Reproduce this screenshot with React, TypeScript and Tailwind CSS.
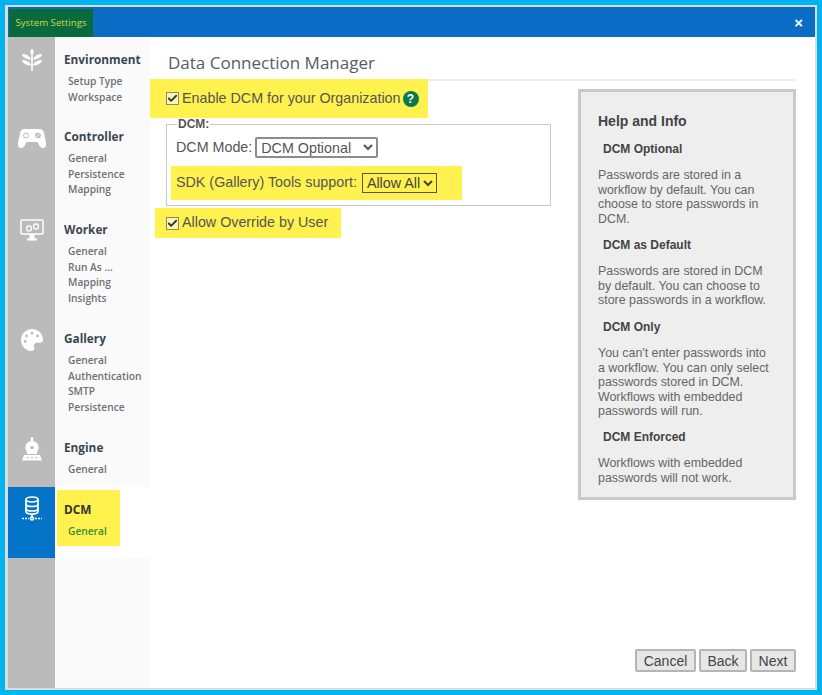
import React from "react";
import { FaPalette } from "react-icons/fa";
import { Check } from "lucide-react";

const LeafIcon = () => (
  <svg width="20" height="24" viewBox="0 0 20 24" fill="white">
    <path d="M10 1c2.200 1.600 2.600 3.500 0 6.500C7.400 4.500 7.800 2.600 10 1Z" />
    <path d="M0 6c4 0 7.500 1.500 9.200 5.500C5 11.500 1 10.200 0 6Z" />
    <path d="M20 6c-4 0-7.500 1.500-9.200 5.500 4.200 0 8.200-1.300 9.200-5.500Z" />
    <path d="M0 12c4 0 7.500 1.500 9.200 5.500C5 17.500 1 16.200 0 12Z" />
    <path d="M20 12c-4 0-7.500 1.500-9.200 5.500 4.200 0 8.200-1.300 9.200-5.500Z" />
    <path d="M9.200 7h1.600v15.500c0 .7-1.600.7-1.600 0Z" />
  </svg>
);

const PadIcon = () => (
  <svg width="28" height="19" viewBox="0 0 28 19">
    <path fill="white" d="M7 0h14c3 0 4.500 1.500 5 4l2 10c.5 3-1 5-3 5-1.800 0-2.800-1-3.800-2.500L19.500 13h-11l-1.700 3.500C5.800 18 4.800 19 3 19c-2 0-3.500-2-3-5L2 4c.5-2.500 2-4 5-4Z" />
    <circle cx="8" cy="6.500" r="2.500" fill="none" stroke="#bbbbbb" strokeWidth="1" />
    <circle cx="20" cy="6.500" r="2.800" fill="#bbbbbb" />
    <path d="M18.500 8 21.500 5" stroke="white" strokeWidth="1" />
  </svg>
);

const MonitorIcon = () => (
  <svg width="24" height="22" viewBox="0 0 24 22" fill="none" stroke="white">
    <rect x="1" y="1" width="22" height="14" rx="1" strokeWidth="1.500" />
    <circle cx="9" cy="9.500" r="2.500" strokeWidth="1.300" />
    <circle cx="16" cy="7.500" r="2.500" strokeWidth="1.300" />
    <path d="M10.500 16h3v3h-3Z M7 20.500h10" strokeWidth="2" fill="white" />
  </svg>
);

const EngineIcon = () => (
  <svg width="20" height="24" viewBox="0 0 20 24" fill="white">
    <path d="M10 0a1.300 1.300 0 0 1 1 2.200V5H9V2.200A1.300 1.300 0 0 1 10 0Z" />
    <path fillRule="evenodd" d="M10 4a6.500 6.500 0 0 1 5 10.700V17H5v-2.300A6.500 6.500 0 0 1 10 4Zm0 4.800a1.700 1.700 0 1 0 0 3.400 1.700 1.700 0 0 0 0-3.400Z" />
    <path d="M2 18h16l2 5.500H0Z" />
    <path d="M5 20.500h2M9 20.500h2M13 20.500h2" stroke="#bbbbbb" strokeWidth="1" />
  </svg>
);

const DbIcon = () => (
  <svg width="20" height="26" viewBox="0 0 20 26" fill="none" stroke="white" strokeWidth="1.700">
    <ellipse cx="10" cy="3.500" rx="6" ry="2.500" />
    <path d="M4 3.500v12c0 1.400 2.700 2.500 6 2.500s6-1.100 6-2.500v-12" />
    <path d="M4 8c0 1.400 2.700 2.500 6 2.500S16 9.400 16 8M4 12.500c0 1.400 2.700 2.500 6 2.500s6-1.100 6-2.500" />
    <path d="M10 18v3" />
    <circle cx="10" cy="22.500" r="1.500" />
    <path d="M0 22.500h7M13 22.500h7" strokeDasharray="2 1" />
  </svg>
);

type Section = { title: string; items: string[]; h: string; icon: React.ReactNode; iconPad: string };

const sections: Section[] = [
  { title: "Environment", items: ["Setup Type", "Workspace"], h: "h-[77px]", icon: <LeafIcon />, iconPad: "pt-[11px]" },
  { title: "Controller", items: ["General", "Persistence", "Mapping"], h: "h-[93px]", icon: <PadIcon />, iconPad: "pt-[15px]" },
  { title: "Worker", items: ["General", "Run As ...", "Mapping", "Insights"], h: "h-[109px]", icon: <MonitorIcon />, iconPad: "pt-[12px]" },
  { title: "Gallery", items: ["General", "Authentication", "SMTP", "Persistence"], h: "h-[109px]", icon: <FaPalette size={22} color="white" />, iconPad: "pt-[13px]" },
  { title: "Engine", items: ["General"], h: "h-[62px]", icon: <EngineIcon />, iconPad: "pt-[12px]" },
];

const Box = () => (
  <span className="flex h-[13px] w-[13px] shrink-0 items-center justify-center border border-[#8a8a6a] bg-[#fbf6b0]">
    <Check size={13} strokeWidth={4} color="#333" />
  </span>
);

const helpBlocks = [
  { title: "DCM Optional", text: "Passwords are stored in a workflow by default. You can choose to store passwords in DCM.", h: "h-[96px]" },
  { title: "DCM as Default", text: "Passwords are stored in DCM by default. You can choose to store passwords in a workflow.", h: "h-[82px]" },
  { title: "DCM Only", text: "You can't enter passwords into a workflow. You can only select passwords stored in DCM. Workflows with embedded passwords will run.", h: "h-[110px]" },
  { title: "DCM Enforced", text: "Workflows with embedded passwords will not work.", h: "h-[60px]" },
];

export default function App() {
  return (
    <div className="h-[695px] w-[822px] overflow-hidden bg-[#00b4f0] p-[5px] font-['Liberation_Sans',Arial,sans-serif]">
      <div className="flex h-[685px] w-[812px] flex-col border-b-[2px] border-l-[3px] border-r-[2px] border-t-[2px] border-[#dcdcdc] bg-white">
        <div className="flex h-[30px] shrink-0 items-stretch justify-between bg-[#0a6cc4]">
          <div className="ml-[1px] mt-[2px] flex w-[84px] items-center justify-center bg-[#0b6a3d] font-['Open_Sans',sans-serif] text-[9.700px] text-[#c4dc4c]">
            System Settings
          </div>
          <div className="mr-[12px] flex items-center text-[15px] font-bold leading-none text-white">×</div>
        </div>

        <div className="flex min-h-0 flex-1">
          <div className="flex w-[142px] shrink-0 flex-col">
            {sections.map((s) => (
              <div key={s.title} className={`flex shrink-0 ${s.h}`}>
                <div className={`flex w-[47px] shrink-0 justify-center bg-[#bbbbbb] ${s.iconPad}`}>{s.icon}</div>
                <div className="flex-1 bg-[#fafafa] pl-[9px] pt-[15px] font-['Open_Sans',sans-serif]">
                  <div className="text-[11.800px] font-bold leading-[14px] text-[#3b4650]">{s.title}</div>
                  <div className="mt-[8px] pl-[4px] text-[10.200px] font-semibold leading-[15.500px] text-[#6b7278]">
                    {s.items.map((i, n) => (
                      <div key={n}>{i}</div>
                    ))}
                  </div>
                </div>
              </div>
            ))}
            <div className="flex h-[71px] shrink-0">
              <div className="flex w-[47px] shrink-0 justify-center bg-[#0474c8] pt-[9px]">
                <DbIcon />
              </div>
              <div className="flex-1 bg-white pl-[2px] pt-[3px] font-['Open_Sans',sans-serif]">
                <div className="h-[56px] w-[63px] bg-[#fff24f] pl-[7px] pt-[12px]">
                  <div className="text-[11.800px] font-bold leading-[14px] text-[#333]">DCM</div>
                  <div className="mt-[8px] pl-[4px] text-[10.200px] font-semibold leading-[15.500px] text-[#3d8a3a]">General</div>
                </div>
              </div>
            </div>
            <div className="flex flex-1">
              <div className="w-[47px] shrink-0 bg-[#bbbbbb]" />
              <div className="flex-1 bg-[#fafafa]" />
            </div>
          </div>

          <div className="flex min-w-0 flex-1 flex-col">
            <div className="ml-[18px] mr-[20px] h-[44px] shrink-0 border-b-2 border-[#eeeeee] pt-[14px] font-['Open_Sans',sans-serif] text-[17px] leading-[24px] text-[#555d63]">
              Data Connection Manager
            </div>
            <div className="flex flex-1">
              <div className="-mt-[2px] w-[428px] shrink-0 text-[14.300px] text-[#555]">
                <div className="flex h-[39px] w-[278px] items-center gap-[3px] bg-[#fff24f] pl-[16px]">
                  <Box />
                  <span>Enable DCM for your Organization</span>
                  <span className="ml-[-1px] flex h-[16px] w-[16px] items-center justify-center rounded-full bg-[#0b7a48] text-[12px] font-bold text-white">?</span>
                </div>
                <fieldset className="ml-[16px] h-[88px] w-[385px] border border-[#c8c8c8] pl-[9px]">
                  <legend className="ml-[1px] px-[1px] text-[12px] font-bold leading-[12px] text-[#555]">DCM:</legend>
                  <div className="mt-[7px] flex h-[21px] items-center">
                    <span>DCM Mode:</span>
                    <select defaultValue="DCM Optional" className="ml-[3px] h-[21px] w-[123px] rounded-[2px] border-2 border-[#8c8c8c] bg-white px-0 text-[14.300px] text-[#555]">
                      <option>DCM Optional</option>
                    </select>
                  </div>
                  <div className="-ml-[5px] mt-[8px] flex h-[34px] w-[291px] items-center bg-[#fff24f] pl-[5px]">
                    <span>SDK (Gallery) Tools support:</span>
                    <select defaultValue="Allow All" className="ml-[5px] h-[20px] w-[75px] border border-[#555] bg-[#fff24f] p-0 text-[14.300px] text-[#444]">
                      <option>Allow All</option>
                    </select>
                  </div>
                </fieldset>
                <div className="ml-[5px] mt-[2px] flex h-[30px] w-[186px] items-center gap-[3px] bg-[#fff24f] pl-[11px]">
                  <Box />
                  <span>Allow Override by User</span>
                </div>
              </div>

              <div className="mt-[8px] h-[411px] w-[218px] shrink-0 border-[3px] border-[#c9c9c9] bg-[#eeeeee] pl-[17px] pr-[20px] pt-[20px] text-[12.400px] leading-[14.500px] text-[#666]">
                <div className="h-[29px] text-[14px] font-bold leading-[18px] text-[#444]">Help and Info</div>
                {helpBlocks.map((b) => (
                  <div key={b.title} className={b.h}>
                    <div className="pl-[5px] text-[12px] font-bold leading-[16px] text-[#444]">{b.title}</div>
                    <p className="mt-[11px]">{b.text}</p>
                  </div>
                ))}
              </div>
            </div>
            <div className="mb-[16px] mr-[19px] flex shrink-0 justify-end gap-[3px]">
              {[["Cancel", "w-[61px]"], ["Back", "w-[48px]"], ["Next", "w-[46px]"]].map(([t, w]) => (
                <button key={t} className={`h-[23px] rounded-[2px] border-2 border-[#b5b5b5] bg-[#e6e6e6] text-[14px] leading-none text-[#444] ${w}`}>
                  {t}
                </button>
              ))}
            </div>
          </div>
        </div>
      </div>
    </div>
  );
}
